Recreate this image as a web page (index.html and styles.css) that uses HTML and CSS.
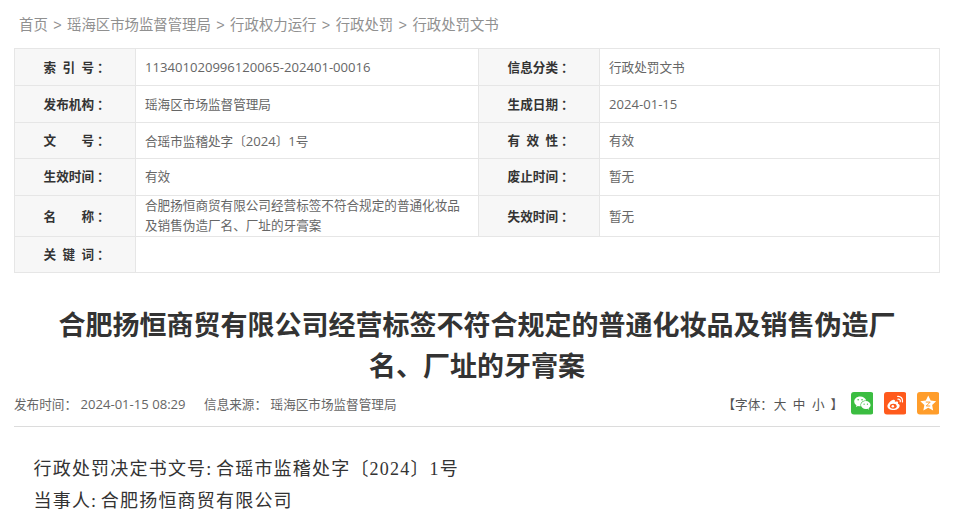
FILE: index.html
```html
<!DOCTYPE html>
<html lang="zh-CN">
<head>
<meta charset="utf-8">
<title>行政处罚文书</title>
<link rel="stylesheet" href="styles.css">
</head>
<body>
<div class="page">
  <nav class="crumbs">
    <a>首页</a><span class="sep">&gt;</span><a>瑶海区市场监督管理局</a><span class="sep">&gt;</span><a>行政权力运行</a><span class="sep">&gt;</span><a>行政处罚</a><span class="sep">&gt;</span><a>行政处罚文书</a>
  </nav>
  <table class="info">
    <colgroup><col class="c-label"><col class="c-value"><col class="c-label"><col></colgroup>
    <tr class="r1">
      <th><span class="lb">索引号</span>：</th><td><span class="num">113401020996120065-202401-00016</span></td>
      <th><span class="lb">信息分类</span>：</th><td>行政处罚文书</td>
    </tr>
    <tr class="r1">
      <th><span class="lb">发布机构</span>：</th><td>瑶海区市场监督管理局</td>
      <th><span class="lb">生成日期</span>：</th><td><span class="num">2024-01-15</span></td>
    </tr>
    <tr class="r2">
      <th><span class="lb">文号</span>：</th><td>合瑶市监稽处字〔<span class="num">2024</span>〕<span class="num">1</span>号</td>
      <th><span class="lb">有效性</span>：</th><td>有效</td>
    </tr>
    <tr class="r1 high">
      <th><span class="lb">生效时间</span>：</th><td>有效</td>
      <th><span class="lb">废止时间</span>：</th><td>暂无</td>
    </tr>
    <tr class="r3">
      <th><span class="lb">名称</span>：</th><td class="multi">合肥扬恒商贸有限公司经营标签不符合规定的普通化妆品及销售伪造厂名、厂址的牙膏案</td>
      <th><span class="lb">失效时间</span>：</th><td>暂无</td>
    </tr>
    <tr class="r2 high">
      <th><span class="lb">关键词</span>：</th><td colspan="3"></td>
    </tr>
  </table>
  <h1 class="title">合肥扬恒商贸有限公司经营标签不符合规定的普通化妆品及销售伪造厂名、厂址的牙膏案</h1>
  <div class="meta">
    <div class="meta-left"><span>发布时间： <span class="num">2024-01-15 08:29</span></span><span>信息来源： 瑶海区市场监督管理局</span></div>
    <div class="meta-right">
      <div class="fontsize">【字体：<a class="fs-first">大</a><a>中</a><a class="fs-last">小</a>】</div>
      <div class="share">
        <svg class="ico" viewBox="0 0 23 23"><rect width="23" height="23" rx="3" fill="#3bbd41"/><path d="M9.300 4.600c-3.400 0-6 2.200-6 5 0 1.600.9 2.900 2.300 3.900l-.6 1.800 2.100-1.100c.7.2 1.400.3 2.200.3h.6c-.1-.4-.2-.8-.2-1.200 0-2.600 2.400-4.600 5.400-4.600h.5c-.6-2.300-3.100-4.100-6.300-4.100z" fill="#fff"/><path d="M20 13.300c0-2.300-2.200-4.100-4.900-4.100s-4.900 1.800-4.900 4.100 2.200 4.100 4.900 4.100c.6 0 1.100-.1 1.700-.2l1.700.9-.5-1.500c1.200-.8 2-2 2-3.300z" fill="#fff"/><circle cx="7.300" cy="8" r=".8" fill="#3bbd41"/><circle cx="11.300" cy="8" r=".8" fill="#3bbd41"/><circle cx="13.400" cy="12.500" r=".65" fill="#3bbd41"/><circle cx="16.800" cy="12.500" r=".65" fill="#3bbd41"/></svg>
        <svg class="ico" viewBox="0 0 23 23"><rect width="23" height="23" rx="3" fill="#ff5a1c"/><path d="M9.600 18.500c-3.400 0-6.100-1.600-6.100-3.900 0-2.400 3.600-6.300 6.300-6.600 1.300-.1 1.700.9 1.300 2.100 1.700-.6 3.300-.6 3.300.8 0 .4-.1.700-.3 1 1.200.4 1.900 1.100 1.900 2.100 0 2.400-3 4.500-6.400 4.500z" fill="#fff"/><ellipse cx="9.500" cy="14.500" rx="3.500" ry="2.500" fill="#ff5a1c"/><circle cx="9" cy="14.600" r="1.300" fill="#fff"/><path d="M14 4.500c3-.4 5.600 2.200 4.900 5.500M14.300 7.200c1.500-.2 2.600 1 2.300 2.600" fill="none" stroke="#fff" stroke-width="1.300" stroke-linecap="round"/></svg>
        <svg class="ico" viewBox="0 0 23 23"><rect width="23" height="23" rx="3" fill="#ff9d2b"/><path d="M11.500 3.500l2.500 5.100 5.600.8-4.100 3.900 1 5.500-5-2.600-5 2.600 1-5.500-4.100-3.900 5.600-.8z" fill="#fff"/><path d="M9 10.300h4.500L9.500 14.300h4" fill="none" stroke="#ff9d2b" stroke-width="1"/></svg>
      </div>
    </div>
  </div>
  <div class="body">
    <p>行政处罚决定书文号<span class="colon">:</span>合瑶市监稽处字〔2024〕1号</p>
    <p>当事人<span class="colon">:</span>合肥扬恒商贸有限公司</p>
  </div>
</div>
</body>
</html>
```
FILE: styles.css
```css
* { box-sizing: border-box; }
html, body { margin: 0; padding: 0; background: #fff; height: 516px; overflow: hidden; }
body { font-family: "Liberation Sans", "Noto Sans CJK SC", sans-serif; color: #666; }
.page { padding: 0 14px; }
.crumbs { height: 48px; padding: 15px 0 0 5px; font-size: 14.400px; line-height: 20px; color: #909090; white-space: nowrap; }
.sep { margin: 0 5.400px; }
.num { font-family: "Open Sans", "Liberation Sans", sans-serif; font-size: 13.100px; }
.info { width: 926px; border-collapse: collapse; table-layout: fixed; font-size: 12.600px; }
.c-label { width: 121px; }
.c-value { width: 343px; }
.info th, .info td { border: 1px solid #e6e6e6; padding: 3px 0 0; line-height: 19.500px; }
.info th { background: #f7f7f7; color: #333; font-weight: bold; text-align: left; padding-left: 28.600px; white-space: nowrap; }
.info td { padding-left: 9px; padding-right: 9px; color: #666; }
.info .r3 th, .info .r3 td { padding-top: 2.500px; }
.info .high th, .info .high td { padding-top: 2px; }
.info td.multi { padding-top: 1px; padding-right: 10px; }
.lb { display: inline-block; width: 50.400px; margin-right: 3px; text-align-last: justify; vertical-align: top; }
.r1 { height: 37px; }
.r2 { height: 36px; }
.r3 { height: 41px; }
.title { margin: 33px 0 0; padding: 0 40px; font-size: 27px; line-height: 41px; font-weight: bold; color: #333; text-align: center; }
.meta { display: flex; justify-content: space-between; align-items: center; height: 39px; border-bottom: 1px solid #dcdcdc; font-size: 12.600px; padding-bottom: 7px; color: #666; }
.meta-left { display: flex; gap: 18.500px; }
.meta-right { display: flex; align-items: center; padding-right: 1px; }
.fontsize { color: #555; margin-right: 7.500px; }
.fontsize a { margin: 0 3.300px; }
.fontsize .fs-first { margin-left: 0.800px; }
.fontsize .fs-last { margin-right: 5.800px; }
.share { display: flex; gap: 10.500px; }
.ico { display: block; width: 22.500px; height: 22.500px; }
.body { padding: 26px 0 0 19.500px; font-family: "Liberation Serif", "Noto Sans CJK SC", serif; font-size: 18px; letter-spacing: 1.200px; color: #333; }
.body p { margin: 0; line-height: 32px; }
.colon { margin-right: 3.500px; }
```
